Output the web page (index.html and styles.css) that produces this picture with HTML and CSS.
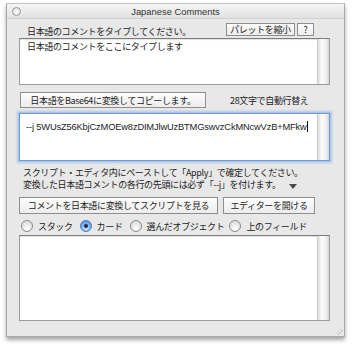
FILE: index.html
```html
<html>
    <head>
        <title>Japanese Comments</title>
        <link rel="stylesheet" href="styles.css">
    </head>
    <body>
        <div class="window">
            <div class="titlebar">
                <span class="close"></span>
                <span class="title">Japanese Comments</span>
            </div>
            <div class="content">
                <div class="row row-top">
                    <span class="label">日本語のコメントをタイプしてください。</span>
                    <div class="btns">
                        <button class="btn btn-small">パレットを縮小</button>
                        <button class="btn btn-small btn-help">?</button>
                    </div>
                </div>
                <div class="field field-top">
                    <div class="field-text">日本語のコメントをここにタイプします</div>
                    <div class="scroll"></div>
                </div>
                <div class="row row-convert">
                    <button class="btn btn-convert">日本語をBase64に変換してコピーします。</button>
                    <span class="wrap-note">28文字で自動行替え</span>
                </div>
                <div class="field field-code">
                    <div class="field-text code">--j 5WUsZ56KbjCzMOEw8zDIMJlwUzBTMGswvzCkMNcwVzB+MFkw<span class="caret"></span></div>
                    <div class="scroll"></div>
                </div>
                <p class="note">
                    スクリプト・エディタ内にペーストして「Apply」で確定してください。<br>
                    変換した日本語コメントの各行の先頭には必ず「--j」を付けます。<span class="tri"></span>
                </p>
                <div class="row row-actions">
                    <button class="btn btn-view">コメントを日本語に変換してスクリプトを見る</button>
                    <button class="btn btn-editor">エディターを開ける</button>
                </div>
                <div class="radios">
                    <label class="radio"><span class="dot"></span>スタック</label>
                    <label class="radio"><span class="dot on"></span>カード</label>
                    <label class="radio"><span class="dot"></span>選んだオブジェクト</label>
                    <label class="radio radio-last"><span class="dot"></span>上のフィールド</label>
                </div>
                <div class="field field-bottom">
                    <div class="field-text"></div>
                    <div class="scroll"></div>
                </div>
            </div>
            <span class="grip"></span>
        </div>
    </body>
</html>
```

FILE: styles.css
```css
body {
margin: 0;
background-color: white;
font-family: "Noto Sans CJK JP", "Liberation Sans", sans-serif;
color: #222;
}
.window {
position: relative;
margin: 3px 0 0 6px;
width: 339px;
height: 334px;
box-sizing: border-box;
background-color: #e8e8e8;
border: 1px solid #a9a9a9;
border-top-color: #c4c4c4;
box-shadow: 0 3px 4px rgba(0,0,0,0.35);
}
.titlebar {
position: relative;
height: 14px;
background: linear-gradient(#f4f4f4, #e2e2e2);
border-bottom: 1px solid #cfcfcf;
display: flex;
align-items: center;
justify-content: center;
}
.close {
position: absolute;
left: 5px;
top: 3px;
width: 7px;
height: 7px;
border-radius: 50%;
border: 1px solid #9a9a9a;
background: radial-gradient(circle at 50% 60%, #ffffff, #d4d4d4);
}
.title {
font-family: "Liberation Sans", sans-serif;
font-size: 9.4px;
color: #333;
}
.content {
padding: 4px 14px 0 12px;
}
.row {
display: flex;
align-items: center;
}
.label, .wrap-note, .note, .radio, .btn, .field-text {
font-size: 9px;
letter-spacing: -0.35px;
}
.row-top {
height: 13px;
padding-left: 8px;
}
.label {
flex: 1;
margin-top: 4px;
}
.btns {
display: flex;
gap: 2px;
margin-right: 16px;
}
.btn {
font-family: "Noto Sans CJK JP", sans-serif;
color: #222;
background: linear-gradient(#fdfdfd, #ececec);
border: 1px solid #8e8e8e;
padding: 0;
margin: 0;
line-height: 1;
}
.btn-small {
height: 13px;
width: 69px;
}
.btn-help {
width: 17px;
}
.field {
display: flex;
background-color: white;
border: 1px solid #9a9a9a;
border-top-color: #7d7d7d;
box-shadow: inset 0 1px 1px rgba(0,0,0,0.12);
}
.field-text {
flex: 1;
min-width: 0;
padding: 2px 0 0 7px;
line-height: 12px;
}
.scroll {
width: 12px;
background: linear-gradient(to right, #c4c4c4, #e8e8e8 2px, #fdfdfd 5px, #f4f4f4 8px, #e2e2e2 11px, #d2d2d2);
}
.field-top {
height: 47px;
margin-top: 2px;
box-sizing: border-box;
}
.row-convert {
height: 16px;
margin-top: 7px;
}
.btn-convert {
height: 16px;
width: 186px;
margin-left: 1px;
}
.wrap-note {
margin-left: 24px;
}
.field-code {
height: 48px;
margin-top: 5px;
box-sizing: border-box;
border: 1px solid #6e9ad6;
box-shadow: 0 0 0 1px #a9c6ee, 0 0 2px 2px rgba(120,165,225,0.45);
}
.code {
font-family: "Liberation Sans", sans-serif;
font-size: 9.3px;
padding-top: 7px;
padding-left: 6px;
letter-spacing: -0.15px;
white-space: nowrap;
overflow: hidden;
}
.caret {
display: inline-block;
width: 1px;
height: 11px;
background-color: #111;
vertical-align: -2px;
}
.note {
margin: 6px 0 0 4px;
line-height: 12px;
}
.tri {
display: inline-block;
margin-left: 8px;
width: 0;
height: 0;
border-left: 4px solid transparent;
border-right: 4px solid transparent;
border-top: 5px solid #4a4a4a;
vertical-align: -1px;
}
.row-actions {
height: 17px;
margin-top: 6px;
gap: 5px;
}
.btn-view {
height: 17px;
width: 199px;
}
.btn-editor {
height: 17px;
width: 92px;
}
.radios {
display: flex;
align-items: center;
height: 18px;
margin-top: 3px;
padding-left: 2px;
}
.radio {
display: flex;
align-items: center;
margin-right: 7px;
}
.radio-last {
margin-right: 0;
margin-left: -2px;
}
.dot {
width: 10px;
height: 10px;
border-radius: 50%;
border: 1px solid #8a8a8a;
background: radial-gradient(circle at 50% 75%, #ffffff, #e0e0e0 70%);
margin-right: 5px;
display: flex;
align-items: center;
justify-content: center;
}
.dot.on {
border-color: #4d7ec4;
background: radial-gradient(circle at 50% 70%, #cfe6ff, #6ea7ec 60%, #3f7fd0);
}
.dot.on::after {
content: "";
width: 4px;
height: 4px;
border-radius: 50%;
background-color: #1a2a44;
}
.field-bottom {
height: 86px;
box-sizing: border-box;
}
.grip {
position: absolute;
right: 1px;
bottom: 1px;
width: 9px;
height: 9px;
background: linear-gradient(135deg, transparent 50%, #bdbdbd 50%, #f4f4f4 62%, #bdbdbd 70%, #f4f4f4 82%, #c8c8c8);
}
```
